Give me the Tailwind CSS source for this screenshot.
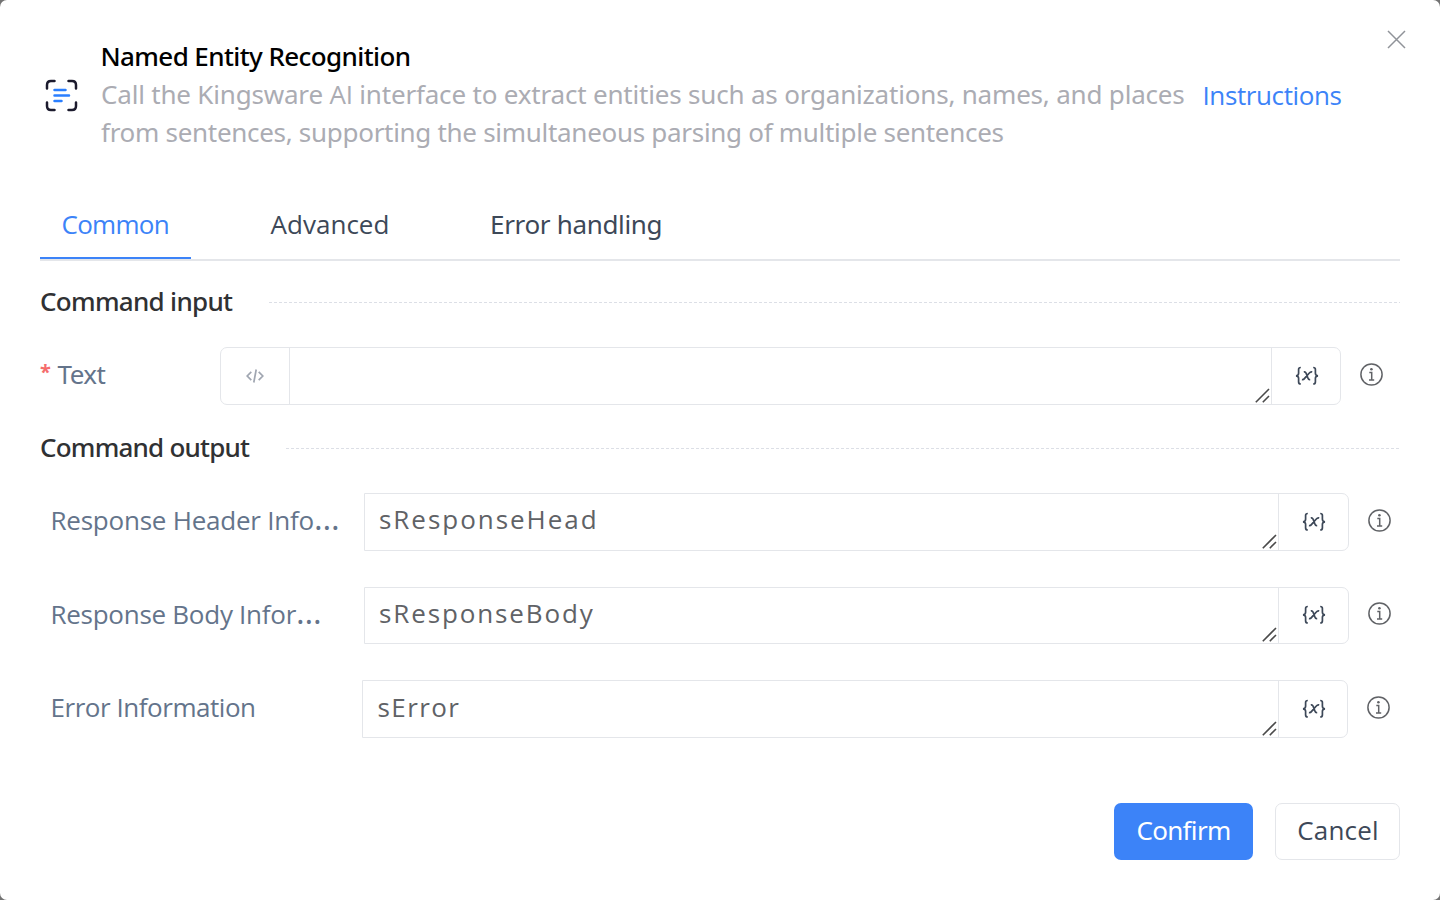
<!DOCTYPE html>
<html lang="en">
<head>
<meta charset="utf-8">
<title>Named Entity Recognition</title>
<script src="https://cdn.jsdelivr.net/npm/@tailwindcss/browser@4"></script>
</head>
<body class="bg-[#737373]">
<svg class="hidden">
  <symbol id="info" viewBox="0 0 23 23"><g fill="none" stroke="#606266" stroke-width="1.5"><circle cx="11.5" cy="11.5" r="10.6"/><path d="M9.3 9.400h2.400v7.300M9 16.900h5.200"/></g><circle cx="11.4" cy="6.300" r="1.300" fill="#606266"/></symbol>
  <symbol id="var" viewBox="0 0 24 20"><g fill="none" stroke="#3d4858" stroke-width="1.700"><path d="M5.800 1.500Q3.600 1.500 3.600 3.500v3.800Q3.600 9.600 1 9.800Q3.600 10 3.600 12.300V16Q3.600 18 5.800 18M18.200 1.500Q20.400 1.500 20.400 3.500v3.800Q20.400 9.600 23 9.800Q20.400 10 20.400 12.300V16Q20.400 18 18.200 18"/><path d="M8.800 5.900Q10.500 5.600 11 7l2 5.300Q13.500 13.800 15.200 13.500M17.200 5.900Q15.500 5.500 14.300 7L9.600 12.400Q8.400 13.900 6.900 13.500"/></g></symbol>
  <symbol id="grip" viewBox="0 0 15 15"><path d="M.8 14.200 14 1M7.800 14.200 14 8" fill="none" stroke="#4a4a4a" stroke-width="1.600"/></symbol>
</svg>
<main class="h-[900px] w-[1440px] overflow-hidden rounded-[7px] bg-white px-10 font-['Open_Sans',sans-serif] text-[26px] leading-[38px] text-[#3d4858]">
  <header class="flex h-[191px] items-start">
    <svg class="mt-[79px] ml-[5px] h-[33px] w-[33px] shrink-0" viewBox="0 0 33 33" fill="none" stroke-width="2.500" stroke-linecap="round"><path stroke="#1c1b2e" d="M2 9.500V6q0-4 4-4h3.500M23.500 2H27q4 0 4 4v3.500M31 23.500V27q0 4-4 4h-3.500M9.500 31H6q-4 0-4-4v-3.500"/><path stroke="#2b7fff" d="M9.500 11h11M9.500 16.500h14.500M9.500 22h7"/></svg>
    <div class="mt-[37px] ml-[22px] w-[1090px] shrink-0 font-['Noto_Sans',sans-serif] whitespace-nowrap text-[#abacb3]">
      <h1 class="pl-[0.500px] font-medium tracking-[-0.600px] text-black">Named Entity Recognition</h1>
      <p class="pl-px tracking-[-0.190px]">Call the Kingsware <span class="font-['Open_Sans']">AI</span> interface to extract entities such as organizations, names, and places</p>
      <p class="pl-px tracking-[-0.295px]">from sentences, supporting the simultaneous parsing of multiple sentences</p>
    </div>
    <a class="mt-[76px] ml-[12.500px] tracking-[-0.392px] text-[#3c83f8]">Instructions</a>
    <svg class="mt-[30px] mr-[-6px] ml-auto h-[19px] w-[19px] shrink-0" viewBox="0 0 19 19" stroke="#909399" stroke-width="1.500"><path d="m1 1 17 17M18 1 1 18"/></svg>
  </header>
  <nav class="flex border-b-2 border-[#e4e6ea] leading-[66px] whitespace-nowrap">
    <div class="w-[151px] border-b-2 border-[#3c83f8] pl-[21.500px] tracking-[-0.700px] text-[#3c83f8]">Common</div>
    <div class="ml-[79.500px] w-[119.500px] tracking-[0.030px]">Advanced</div>
    <div class="ml-[100px] font-['Noto_Sans',sans-serif] tracking-[-0.330px]">Error handling</div>
  </nav>
  <div class="mt-[22px] flex items-center">
    <h2 class="w-[229px] -translate-y-px font-['Noto_Sans',sans-serif] font-medium tracking-[-0.703px] text-[#303133]">Command input</h2>
    <div class="h-px flex-1 bg-[repeating-linear-gradient(90deg,#dcdfe6_0_3px,transparent_3px_5px)]"></div>
  </div>
  <div class="mt-[26px] flex h-[58px] items-center">
    <div class="flex w-[180px] pb-[4px] text-[#64748b]"><span class="w-[17.500px] font-['Noto_Sans',sans-serif] text-[20px] leading-[34px] font-bold text-[#f56c6c]">*</span><span class="font-['Noto_Sans',sans-serif] tracking-[-0.500px]">Text</span></div>
    <div class="flex h-full w-[1121px] rounded-[7px] border border-[#e4e6ea]">
      <div class="flex w-[69px] items-center justify-center border-r border-[#e4e6ea]"><svg class="mb-px h-[14px] w-[18px]" viewBox="0 0 18 14" fill="none" stroke="#a0a6b1" stroke-width="1.700"><path d="M5.300 2.800 1.200 7l4.100 4.200M12.700 2.800 16.800 7l-4.100 4.200M10.200.5 7.800 13.500"/></svg></div>
      <div class="flex flex-1 items-end justify-end pr-px pb-px"><svg class="h-[15px] w-[15px]"><use href="#grip"/></svg></div>
      <div class="flex w-[69px] items-center justify-center border-l border-[#e4e6ea] pl-px"><svg class="mb-px h-[20px] w-[24px]"><use href="#var"/></svg></div>
    </div>
    <svg class="mb-[4px] ml-[19px] h-[23px] w-[23px]"><use href="#info"/></svg>
  </div>
  <div class="mt-[24px] flex items-center">
    <h2 class="w-[246px] -translate-y-px font-['Noto_Sans',sans-serif] font-medium tracking-[-0.789px] text-[#303133]">Command output</h2>
    <div class="h-px flex-1 bg-[repeating-linear-gradient(90deg,#dcdfe6_0_3px,transparent_3px_5px)]"></div>
  </div>
  <div class="mt-[26px] flex h-[58px] items-center">
    <div class="w-[324px] pb-[4px] pl-[10.500px] tracking-[-0.230px] whitespace-nowrap text-[#64748b]">Response Header Info<span class="text-[33px] leading-none">…</span></div>
    <div class="flex h-full w-[985px] rounded-r-[7px] border border-[#e4e6ea]">
      <div class="flex flex-1 items-end justify-between pr-px pb-px pl-[14px]"><span class="pb-[11px] tracking-[1.960px] text-[#606266]">sResponseHead</span><svg class="h-[15px] w-[15px]"><use href="#grip"/></svg></div>
      <div class="flex w-[70px] items-center justify-center border-l border-[#e4e6ea]"><svg class="mb-px h-[20px] w-[24px]"><use href="#var"/></svg></div>
    </div>
    <svg class="mb-[4px] ml-[19px] h-[23px] w-[23px]"><use href="#info"/></svg>
  </div>
  <div class="mt-[36px] flex h-[57px] items-center">
    <div class="w-[324px] pb-[3px] pl-[10.500px] tracking-[-0.270px] whitespace-nowrap text-[#64748b]">Response Body Infor<span class="text-[33px] leading-none">…</span></div>
    <div class="flex h-full w-[985px] rounded-r-[7px] border border-[#e4e6ea]">
      <div class="flex flex-1 items-end justify-between pr-px pb-px pl-[14px]"><span class="pb-[10px] tracking-[1.880px] text-[#606266]">sResponseBody</span><svg class="h-[15px] w-[15px]"><use href="#grip"/></svg></div>
      <div class="flex w-[70px] items-center justify-center border-l border-[#e4e6ea]"><svg class="mb-[2px] h-[20px] w-[24px]"><use href="#var"/></svg></div>
    </div>
    <svg class="mb-[4px] ml-[19px] h-[23px] w-[23px]"><use href="#info"/></svg>
  </div>
  <div class="mt-[36px] flex h-[58px] items-center">
    <div class="w-[322px] pb-[4px] pl-[10.500px] tracking-[-0.460px] whitespace-nowrap text-[#64748b]">Error Information</div>
    <div class="flex h-full w-[986px] rounded-r-[7px] border border-[#e4e6ea]">
      <div class="flex flex-1 items-end justify-between pr-px pb-px pl-[14.500px]"><span class="pb-[10px] tracking-[1.400px] text-[#606266]">sError</span><svg class="h-[15px] w-[15px]"><use href="#grip"/></svg></div>
      <div class="flex w-[69px] items-center justify-center border-l border-[#e4e6ea] pl-px"><svg class="mb-px h-[20px] w-[24px]"><use href="#var"/></svg></div>
    </div>
    <svg class="mb-[4px] ml-[19px] h-[23px] w-[23px]"><use href="#info"/></svg>
  </div>
  <footer class="mt-[65px] flex justify-end gap-[22px]">
    <button class="h-[57px] w-[139px] rounded-[7px] bg-[#3c83f8] pb-[3px] font-['Noto_Sans',sans-serif] tracking-[-0.687px] text-white">Confirm</button>
    <button class="h-[57px] w-[125px] rounded-[7px] border border-[#e4e6ea] pb-[3px] pl-px tracking-[0.150px]">Cancel</button>
  </footer>
</main>
</body>
</html>
